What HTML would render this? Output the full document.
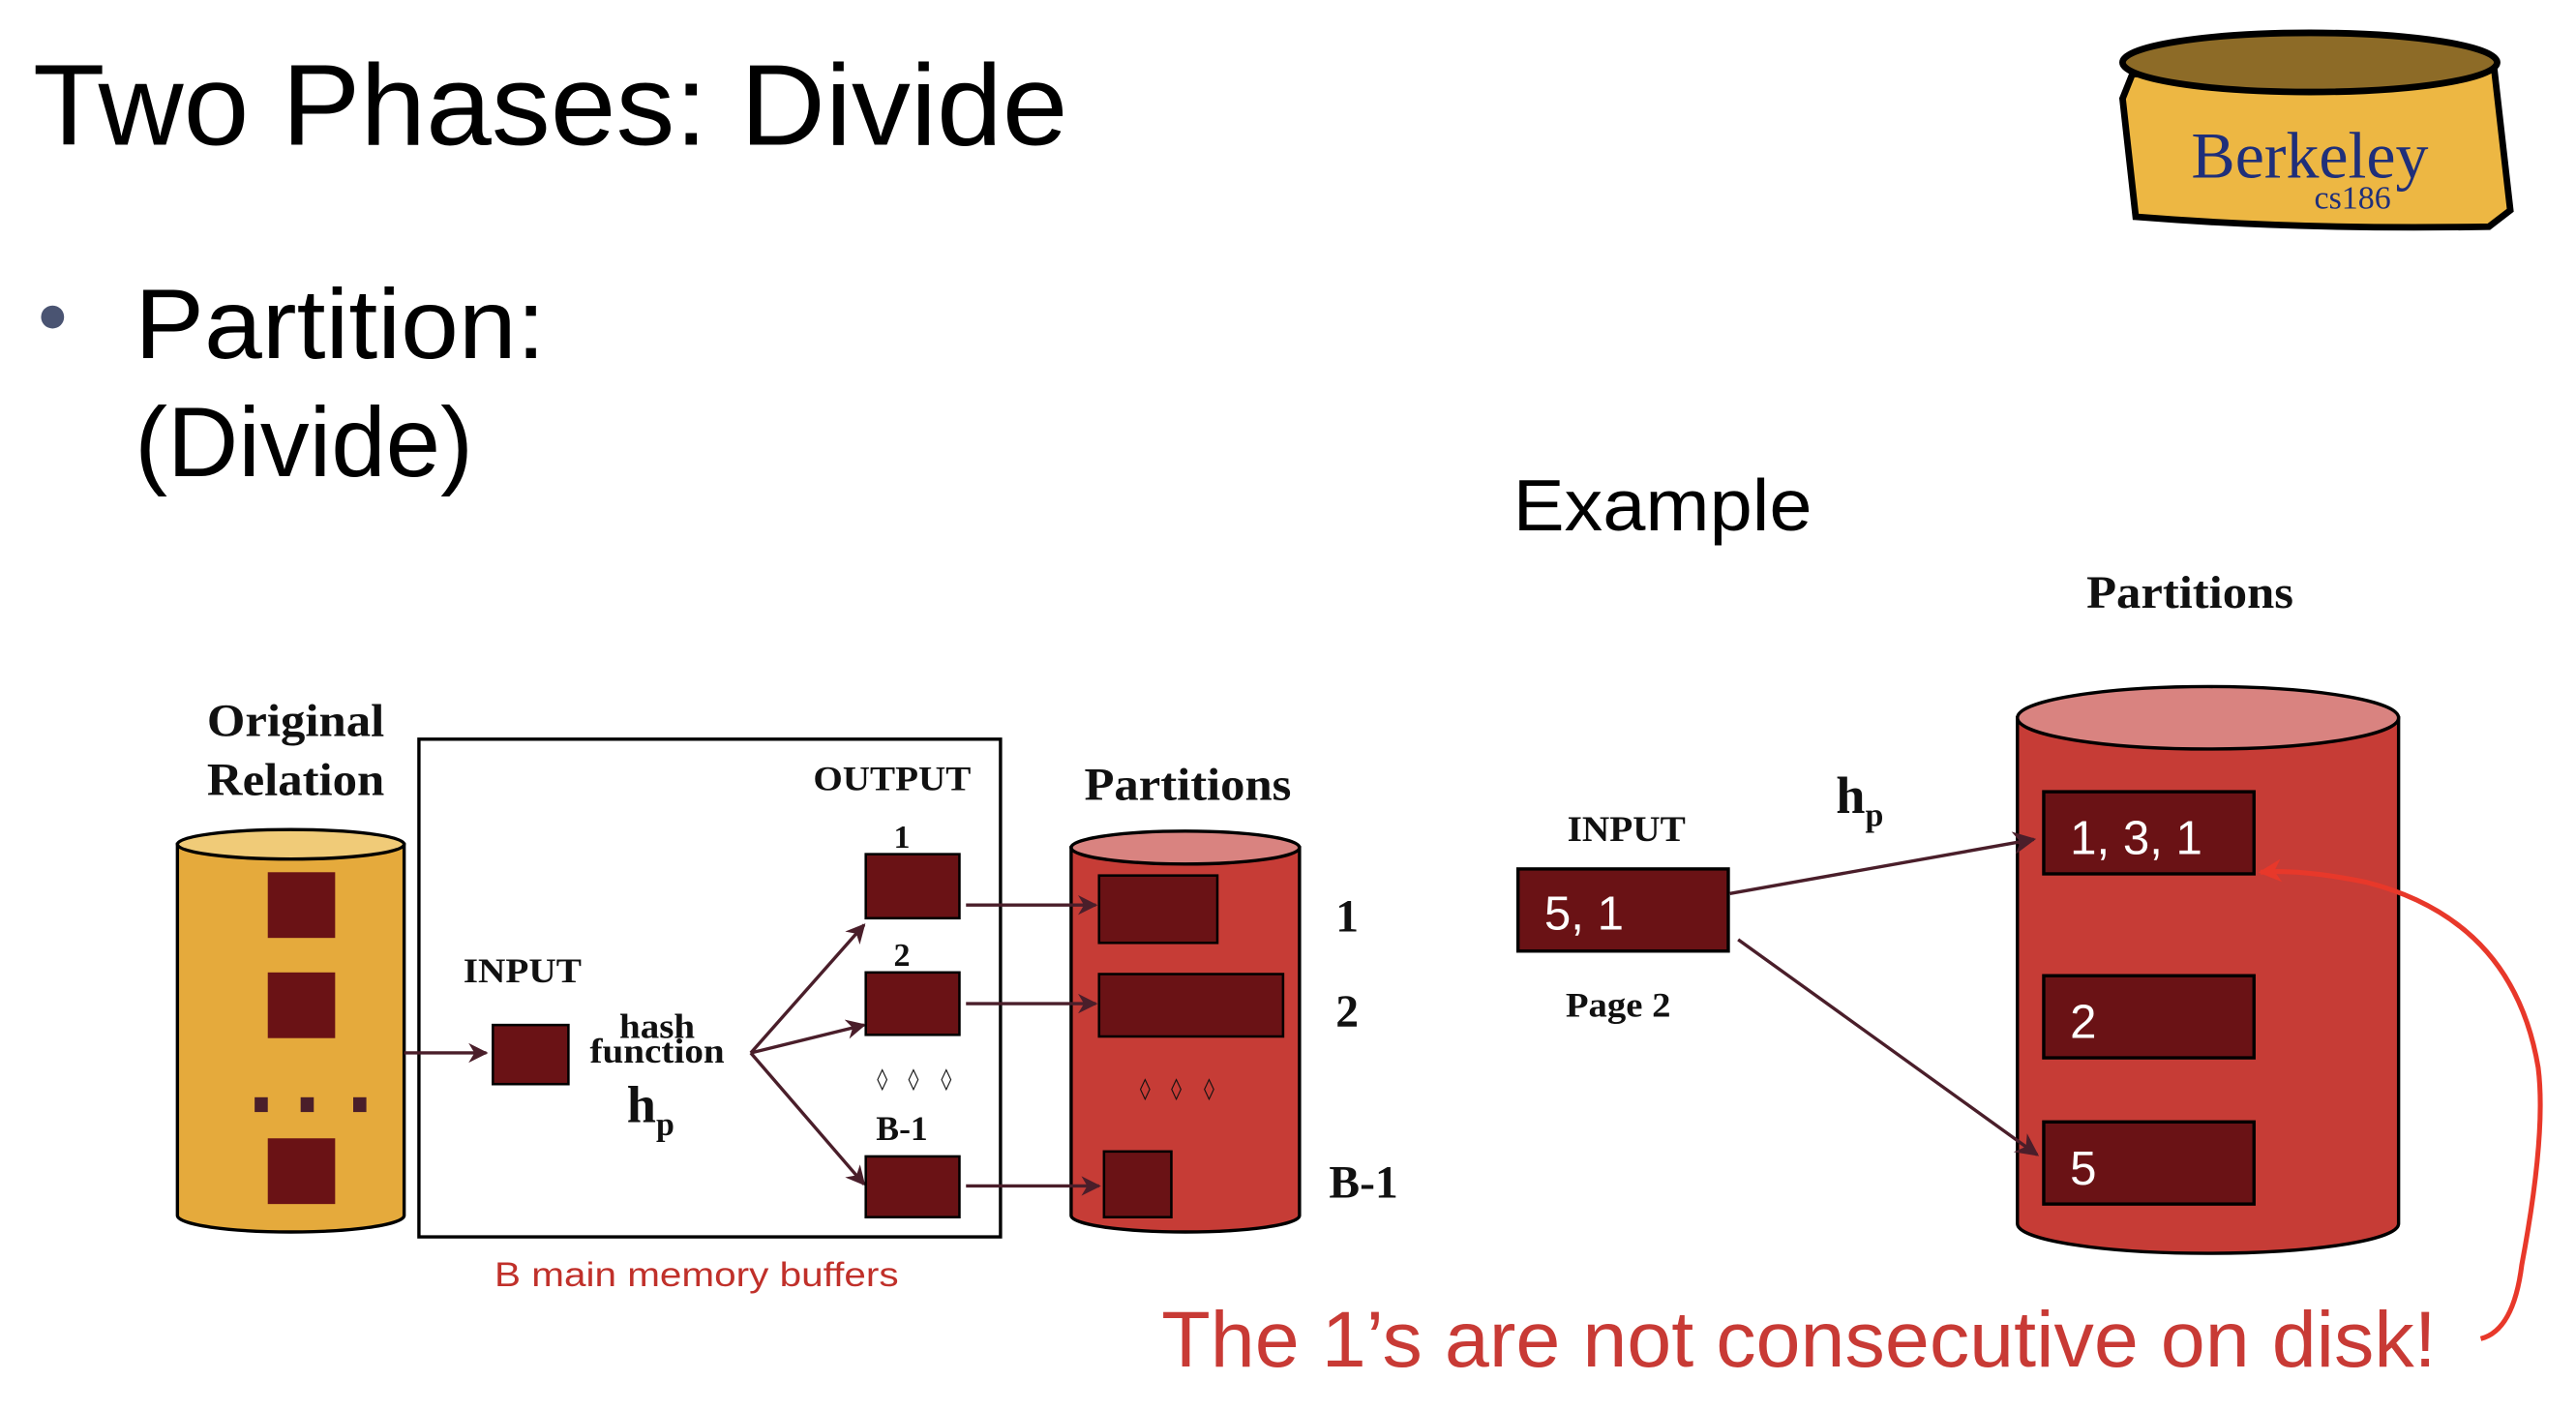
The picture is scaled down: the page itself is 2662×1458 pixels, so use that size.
<!DOCTYPE html>
<html><head><meta charset="utf-8"><style>
html,body{margin:0;padding:0;background:#fff;}
svg{display:block;}
</style></head><body>
<svg width="2662" height="1458" viewBox="0 0 1568 859" preserveAspectRatio="none" xmlns="http://www.w3.org/2000/svg">
<defs>
<marker id="ah" viewBox="0 0 10 10" refX="9" refY="5" markerWidth="12" markerHeight="12" orient="auto" markerUnits="userSpaceOnUse">
<path d="M0,0 L10,5 L0,10 L3,5 z" fill="#4a1e2a"/></marker>
<marker id="ah2" viewBox="0 0 10 10" refX="9" refY="5" markerWidth="14" markerHeight="14" orient="auto" markerUnits="userSpaceOnUse">
<path d="M0,0 L10,5 L0,10 L3,5 z" fill="#4a1e2a"/></marker>
<marker id="ahr" viewBox="0 0 10 10" refX="9" refY="5" markerWidth="14" markerHeight="14" orient="auto" markerUnits="userSpaceOnUse">
<path d="M0,0 L10,5 L0,10 L3,5 z" fill="#e8382a"/></marker>
</defs>
<rect width="1568" height="859" fill="#fff"/>
<g font-family="Liberation Sans, sans-serif" fill="#000">
<text x="20" y="88" font-size="70" textLength="630" lengthAdjust="spacingAndGlyphs">Two Phases: Divide</text>
<circle cx="32" cy="193" r="7" fill="#4a5472"/>
<text x="82" y="218" font-size="60" textLength="250" lengthAdjust="spacingAndGlyphs">Partition:</text>
<text x="82" y="290" font-size="60" textLength="206" lengthAdjust="spacingAndGlyphs">(Divide)</text>
<text x="921" y="323" font-size="44" textLength="182" lengthAdjust="spacingAndGlyphs">Example</text>
</g>
<!-- logo -->
<g>
<path d="M1298,45 L1292,60 L1300,132 Q1400,140 1515,138 L1528,128 L1518,40 Q1410,52 1298,45 z" fill="#edb743" stroke="#000" stroke-width="4"/>
<ellipse cx="1406" cy="38" rx="114" ry="18" fill="#8d6b27" stroke="#000" stroke-width="4"/>
<text x="1406" y="108" font-family="Liberation Serif, serif" font-size="40" fill="#1f2f7a" text-anchor="middle">Berkeley</text>
<text x="1432" y="127" font-family="Liberation Serif, serif" font-size="20" fill="#1f2f7a" text-anchor="middle">cs186</text>
</g>
<!-- left diagram -->
<g font-family="Liberation Serif, serif" font-weight="bold" fill="#111" text-anchor="middle">
<text x="180" y="448" font-size="28" textLength="108" lengthAdjust="spacingAndGlyphs">Original</text>
<text x="180" y="484" font-size="28" textLength="108" lengthAdjust="spacingAndGlyphs">Relation</text>
<text x="723" y="487" font-size="28" textLength="126" lengthAdjust="spacingAndGlyphs">Partitions</text>
<text x="543" y="481" font-size="21" textLength="96" lengthAdjust="spacingAndGlyphs">OUTPUT</text>
<text x="318" y="598" font-size="21" textLength="72" lengthAdjust="spacingAndGlyphs">INPUT</text>
<text x="400" y="632" font-size="21" textLength="46" lengthAdjust="spacingAndGlyphs">hash</text>
<text x="400" y="647" font-size="21" textLength="82" lengthAdjust="spacingAndGlyphs">function</text>
<text x="396" y="683" font-size="32">h<tspan font-size="20" dy="8">p</tspan></text>
<text x="549" y="516" font-size="20">1</text>
<text x="549" y="588" font-size="20">2</text>
<text x="549" y="694" font-size="21">B-1</text>
<text x="820" y="567" font-size="28">1</text>
<text x="820" y="625" font-size="28">2</text>
<text x="830" y="729" font-size="28">B-1</text>
</g>
<!-- yellow cylinder -->
<path d="M108,514 L108,740 A69,10 0 0 0 246,740 L246,514 z" fill="#e5aa3c" stroke="#000" stroke-width="2"/>
<ellipse cx="177" cy="514" rx="69" ry="9" fill="#f0cb78" stroke="#000" stroke-width="2"/>
<g fill="#6a1215">
<rect x="163" y="531" width="41" height="40"/>
<rect x="163" y="592" width="41" height="40"/>
<rect x="163" y="693" width="41" height="40"/>
</g>
<g fill="#4a1e2a"><rect x="155" y="668" width="8" height="9"/><rect x="183" y="668" width="8" height="9"/><rect x="215" y="668" width="8" height="9"/></g>
<rect x="255" y="450" width="354" height="303" fill="none" stroke="#000" stroke-width="2"/>
<path d="M652,516 L652,740 A69.5,10 0 0 0 791,740 L791,516 z" fill="#c63c36" stroke="#000" stroke-width="2"/>
<ellipse cx="721.5" cy="516" rx="69.5" ry="10" fill="#d98380" stroke="#000" stroke-width="2"/>
<g stroke="#4a1e2a" stroke-width="2" fill="none" marker-end="url(#ah)">
<line x1="246" y1="641" x2="296" y2="641"/>
<line x1="457" y1="641" x2="526" y2="563"/>
<line x1="457" y1="641" x2="526" y2="624"/>
<line x1="457" y1="641" x2="526" y2="721"/>
<line x1="588" y1="551" x2="667" y2="551"/>
<line x1="588" y1="611" x2="667" y2="611"/>
<line x1="588" y1="722" x2="669" y2="722"/>
</g>
<g fill="#6a1215" stroke="#000" stroke-width="1.5">
<rect x="300" y="624" width="46" height="36"/>
<rect x="527" y="520" width="57" height="39"/>
<rect x="527" y="592" width="57" height="38"/>
<rect x="527" y="704" width="57" height="37"/>
</g>
<g font-family="DejaVu Sans, sans-serif" font-size="13" font-weight="bold" fill="#111" text-anchor="middle">
<text x="537" y="661">◊</text><text x="556" y="661">◊</text><text x="576" y="661">◊</text>
</g>
<g fill="#6a1215" stroke="#000" stroke-width="1.5">
<rect x="669" y="533" width="72" height="41"/>
<rect x="669" y="593" width="112" height="38"/>
<rect x="672" y="701" width="41" height="40"/>
</g>
<g font-family="DejaVu Sans, sans-serif" font-size="13" font-weight="bold" fill="#111" text-anchor="middle">
<text x="697" y="667">◊</text><text x="716" y="667">◊</text><text x="736" y="667">◊</text>
</g>
<text x="424" y="783" font-family="Liberation Sans, sans-serif" font-size="21" fill="#c0302a" text-anchor="middle" textLength="246" lengthAdjust="spacingAndGlyphs">B main memory buffers</text>
<!-- right diagram -->
<g font-family="Liberation Serif, serif" font-weight="bold" fill="#111" text-anchor="middle">
<text x="1333" y="370" font-size="28" textLength="126" lengthAdjust="spacingAndGlyphs">Partitions</text>
<text x="990" y="512" font-size="22" textLength="72" lengthAdjust="spacingAndGlyphs">INPUT</text>
<text x="985" y="619" font-size="21" textLength="64" lengthAdjust="spacingAndGlyphs">Page 2</text>
<text x="1132" y="495" font-size="32">h<tspan font-size="20" dy="8">p</tspan></text>
</g>
<path d="M1228,437 L1228,745 A116,18 0 0 0 1460,745 L1460,437 z" fill="#c63c36" stroke="#000" stroke-width="2"/>
<ellipse cx="1344" cy="437" rx="116" ry="19" fill="#d98380" stroke="#000" stroke-width="2"/>
<g fill="#6a1215" stroke="#000" stroke-width="2">
<rect x="924" y="529" width="128" height="50"/>
<rect x="1244" y="482" width="128" height="50"/>
<rect x="1244" y="594" width="128" height="50"/>
<rect x="1244" y="683" width="128" height="50"/>
</g>
<g font-family="Liberation Sans, sans-serif" font-size="29" fill="#fff">
<text x="940" y="566">5, 1</text>
<text x="1260" y="520">1, 3, 1</text>
<text x="1260" y="632">2</text>
<text x="1260" y="721">5</text>
</g>
<g stroke="#4a1e2a" stroke-width="2" fill="none" marker-end="url(#ah2)">
<line x1="1053" y1="544" x2="1238" y2="511"/>
<line x1="1058" y1="572" x2="1240" y2="703"/>
</g>
<path d="M1510,815 Q1530,810 1535,770 Q1550,690 1545,650 Q1530,560 1440,537 Q1400,529 1376,531" fill="none" stroke="#e8382a" stroke-width="3" marker-end="url(#ahr)"/>
<text x="707" y="832" font-family="Liberation Sans, sans-serif" font-size="48" fill="#c83a35" textLength="776" lengthAdjust="spacingAndGlyphs">The 1’s are not consecutive on disk!</text>
</svg>
</body></html>
